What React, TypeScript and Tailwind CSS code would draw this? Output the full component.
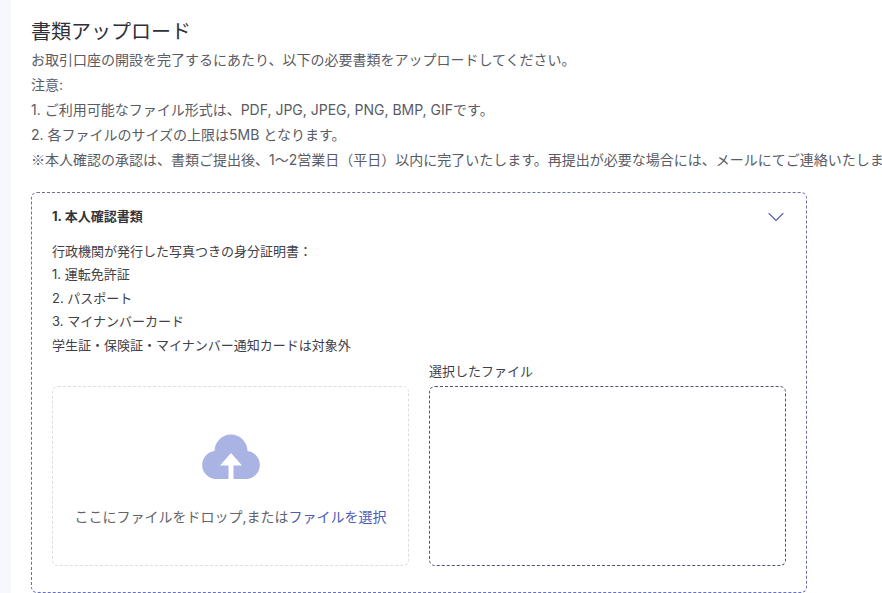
import { ChevronDown } from "lucide-react";

const FONT = "font-['Inter','Noto_Sans_CJK_JP',sans-serif]";

function CloudUpload() {
  return (
    <svg width="60" height="46" viewBox="0 0 60 46" className="block">
      <path
        fill="#a9b4e4"
        d="M15 45A14 14 0 0 1 13.500 17.100A16.500 16.500 0 0 1 46.500 17.100A14 14 0 0 1 45 45H32.500V31.500H41L30 19L19 31.500H27.500V45Z"
      />
    </svg>
  );
}

export default function App() {
  return (
    <div className={`flex h-[593px] w-[882px] overflow-hidden bg-white ${FONT}`}>
      <div className="w-[11px] shrink-0 bg-[#f7f8fd]" />
      <div className="min-w-0 flex-1 pl-5 pt-[18px]">
        <h1 className="text-[20px] leading-[28px] font-normal text-[#2f3038]">書類アップロード</h1>
        <div className="mt-[1px] whitespace-nowrap text-[14px] leading-[25px] text-[#5a5b64]">
          <p>お取引口座の開設を完了するにあたり、以下の必要書類をアップロードしてください。</p>
          <p>注意:</p>
          <p>1. ご利用可能なファイル形式は、PDF, JPG, JPEG, PNG, BMP, GIFです。</p>
          <p>2. 各ファイルのサイズの上限は5MB となります。</p>
          <p>
            <span className="font-['Noto_Sans_CJK_JP',sans-serif]">※</span>
            本人確認の承認は、書類ご提出後、1～2営業日（平日）以内に完了いたします。再提出が必要な場合には、メールにてご連絡いたします。
          </p>
        </div>

        <section className="mt-[20px] h-[401px] w-[776px] rounded-md border border-dashed border-[#6a6f9e] border-b-[#6670c4] px-5 pt-[13px]">
          <div className="flex h-[22px] items-center justify-between">
            <h2 className="text-[13px] font-bold text-[#33343c]">1. 本人確認書類</h2>
            <ChevronDown size={28} strokeWidth={1} className="mr-[-4px] text-[#5a62a8]" />
          </div>
          <div className="mt-[12px] text-[13px] leading-[23.4px] text-[#3f4048]">
            <p>行政機関が発行した写真つきの身分証明書：</p>
            <p>1. 運転免許証</p>
            <p>2. パスポート</p>
            <p>3. マイナンバーカード</p>
            <p>学生証・保険証・マイナンバー通知カードは対象外</p>
          </div>
          <div className="mt-[3px] flex gap-5">
            <div className="mt-[26px] flex h-[180px] w-[357px] flex-col items-center rounded-md border border-dashed border-[#dcdde3] pt-[47px]">
              <CloudUpload />
              <p className="mt-[27px] text-[14px] leading-[20px] text-[#62636b]">
                ここにファイルをドロップ,または<span className="text-[#4a5cb8]">ファイルを選択</span>
              </p>
            </div>
            <div>
              <p className="mb-[3px] text-[13px] leading-[23px] text-[#3f4048]">選択したファイル</p>
              <div className="h-[180px] w-[357px] rounded-md border border-dashed border-[#4f5384]" />
            </div>
          </div>
        </section>
      </div>
    </div>
  );
}
